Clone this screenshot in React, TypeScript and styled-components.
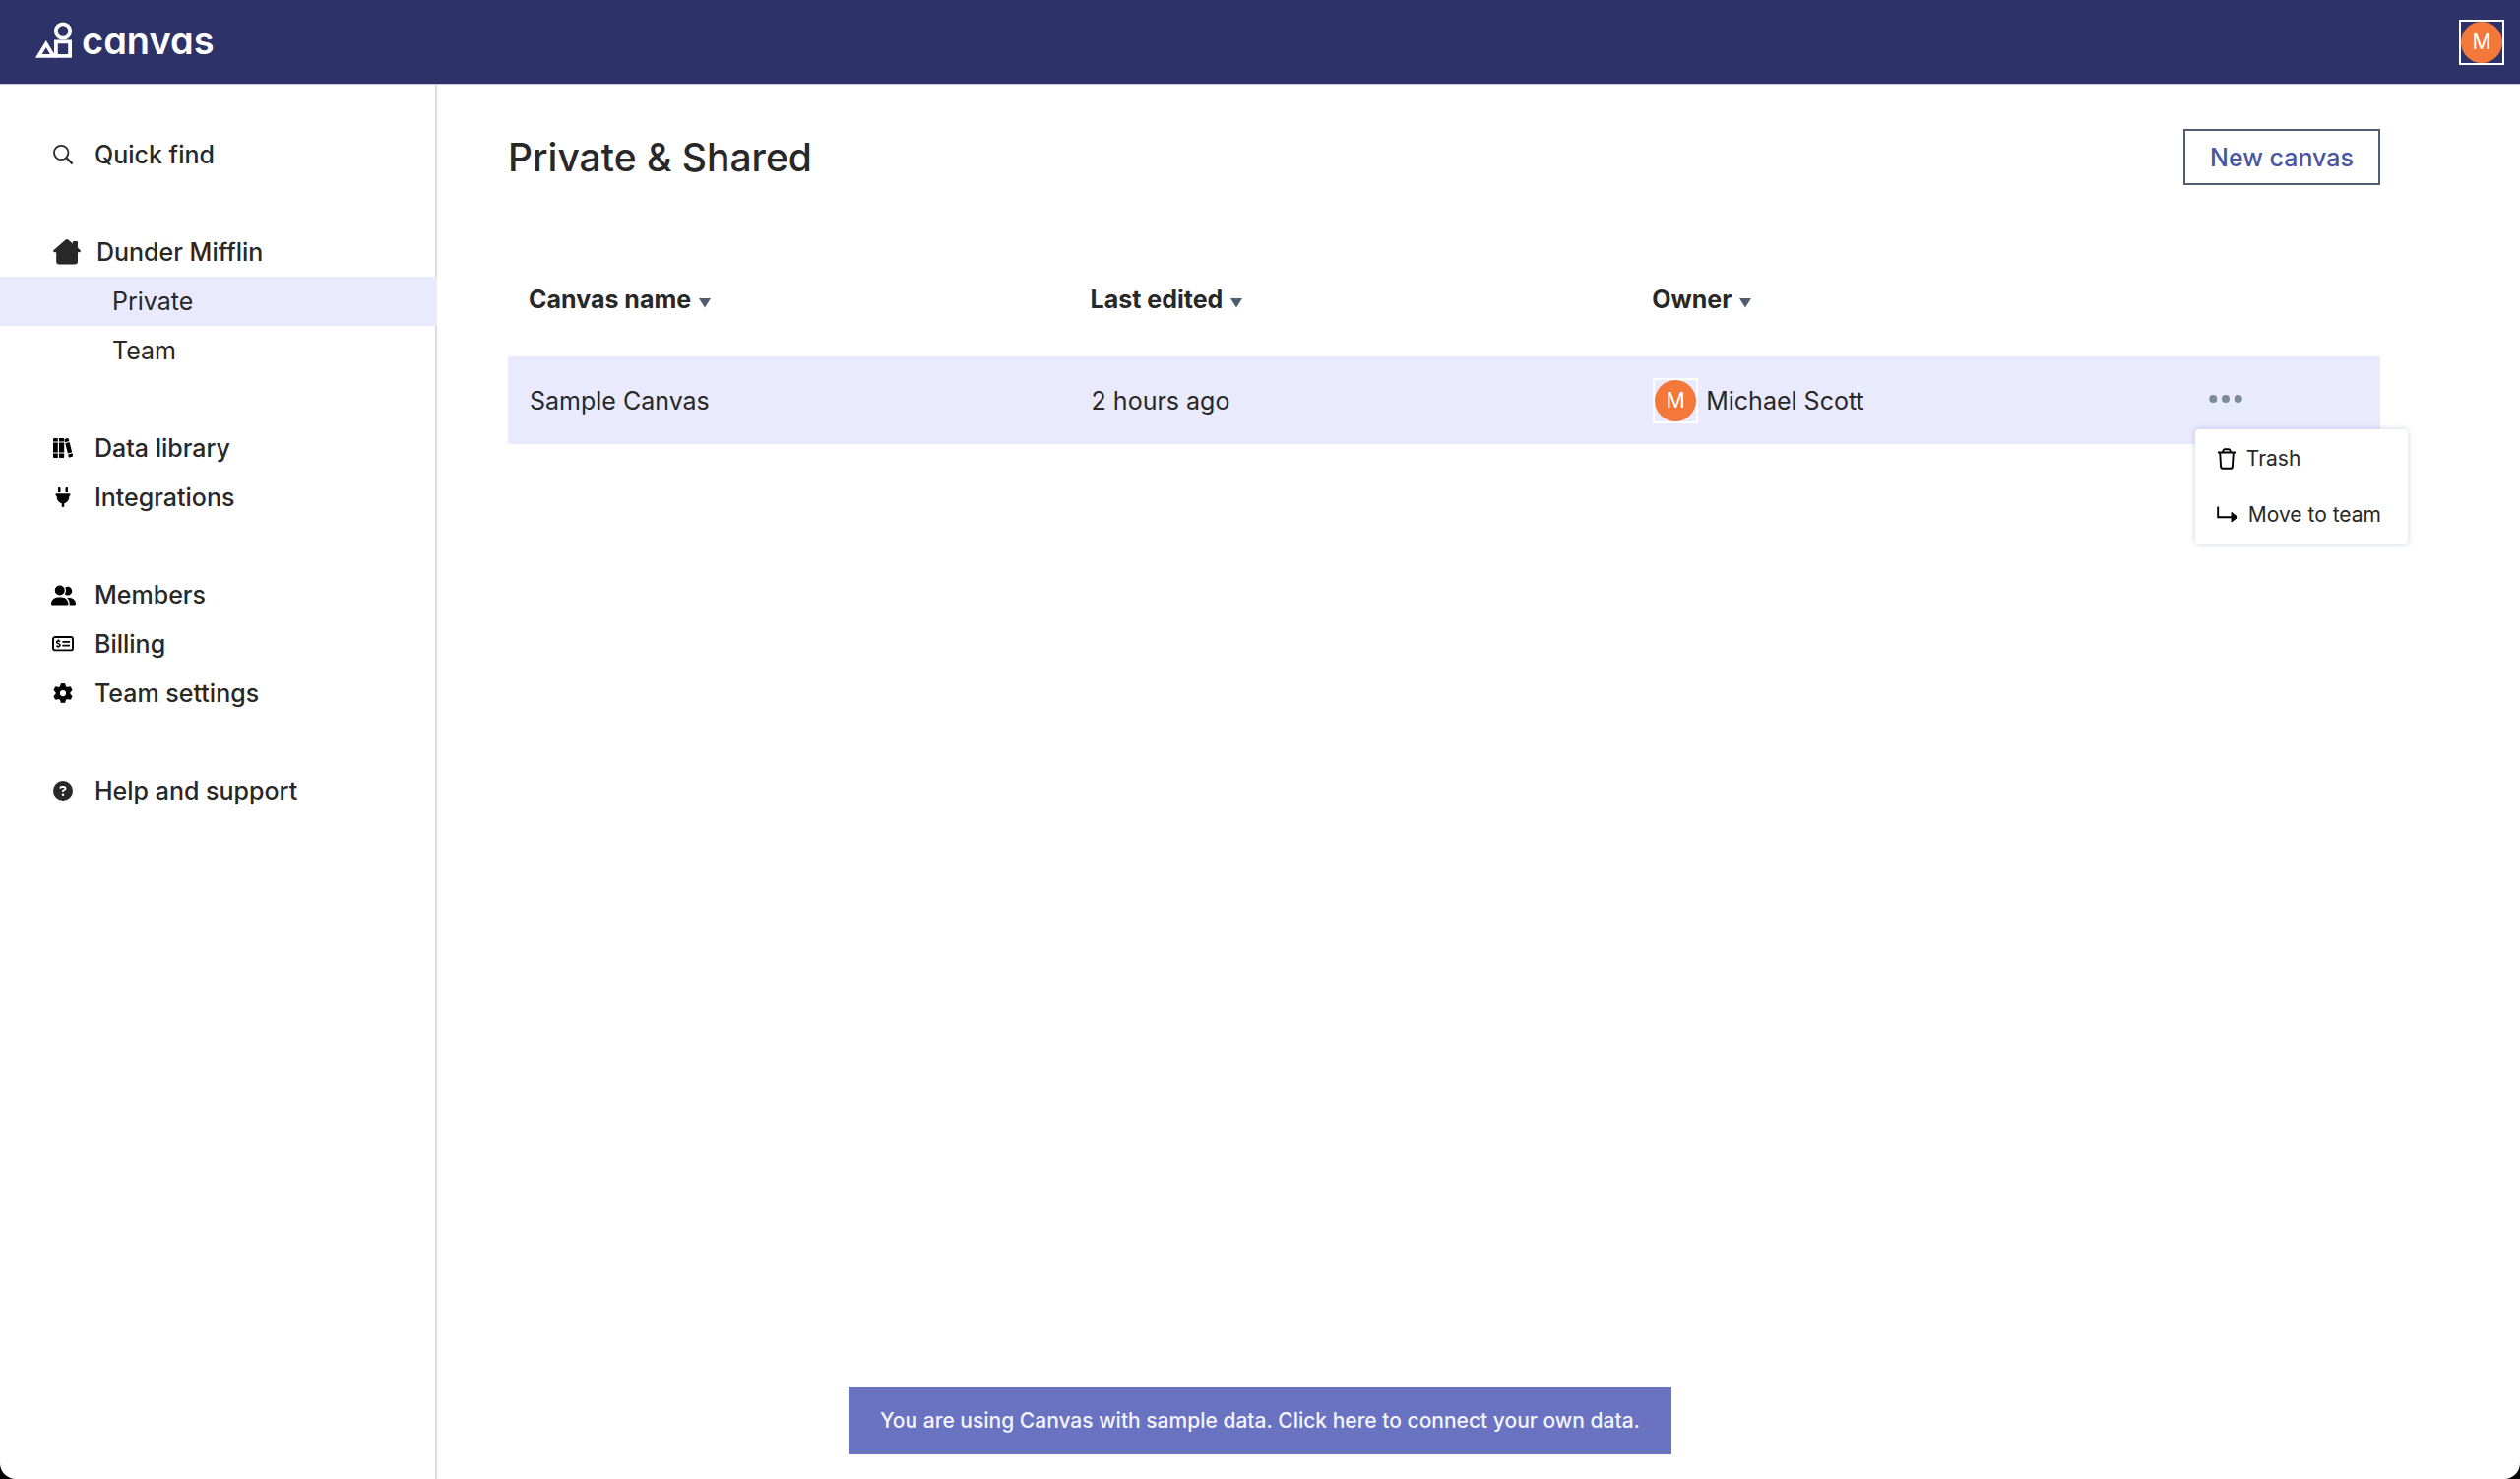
import React from "react";
import styled, { createGlobalStyle } from "styled-components";
import { FaCircleQuestion, FaGear, FaPlug, FaUserGroup } from "react-icons/fa6";

const color = {
  navy: "#2d3369",
  ink: "#282828",
  tint: "#eaeafe",
  line: "#d8dde9",
  slate: "#4f5d70",
  indigo: "#4a55a5",
  orange: "#f5783b",
};

const GlobalStyle = createGlobalStyle`
  *, *::before, *::after { box-sizing: border-box; }
  html { background: #000; }
  body {
    margin: 0;
    font-family: Inter, "Liberation Sans", sans-serif;
    font-size: 25px;
    line-height: 30px;
    color: ${color.ink};
  }
  button { font: inherit; color: inherit; background: none; border: 0; padding: 0; cursor: pointer; }
  a { color: inherit; text-decoration: none; }
  svg { display: block; flex: none; }
`;

const Page = styled.div`
  min-height: 100vh;
  display: flex;
  flex-direction: column;
  background: #fff;
  border-radius: 0 0 16px 16px;
  overflow: hidden;
`;

const Header = styled.header`
  height: 86px;
  padding: 0 16px 0 36px;
  display: flex;
  align-items: center;
  justify-content: space-between;
  background: ${color.navy};
  border-bottom: 1px solid #c9c8e0;
`;

const Brand = styled.a`
  display: flex;
  align-items: center;
  gap: 9px;
  padding-bottom: 3px;
`;

const Wordmark = styled.span`
  color: #fff;
  font-size: 38px;
  line-height: 40px;
  font-weight: 600;
  font-feature-settings: "cv11";
`;

const Avatar = styled.span`
  width: 46px;
  height: 46px;
  display: flex;
  border: 2px solid #fff;
  flex: none;
`;

const Initial = styled.span`
  flex: 1;
  display: flex;
  align-items: center;
  justify-content: center;
  border-radius: 50%;
  background: ${color.orange};
  color: #fff;
  font-size: 21px;
  line-height: 28px;
`;

const Body = styled.div`
  flex: 1;
  display: flex;
`;

const Sidebar = styled.nav`
  width: 444px;
  flex: none;
  padding-top: 46px;
  display: flex;
  flex-direction: column;
  gap: 49px;
  box-shadow: inset -2px 0 ${color.line};
`;

const NavGroup = styled.ul`
  list-style: none;
  margin: 0;
  padding: 0;
`;

const NavLink = styled.a<{ $sub?: boolean; $active?: boolean }>`
  height: 50px;
  display: flex;
  align-items: center;
  gap: 16px;
  padding-left: ${(p) => (p.$sub ? 114 : 48)}px;
  font-weight: ${(p) => (p.$sub ? 400 : 500)};
  background: ${(p) => (p.$active ? color.tint : "transparent")};
`;

const IconSlot = styled.span<{ $wide?: boolean }>`
  width: ${(p) => (p.$wide ? 34 : 32)}px;
  display: flex;
  justify-content: ${(p) => (p.$wide ? "flex-end" : "center")};
  color: ${(p) => (p.$wide ? color.ink : "#000")};
`;

const Main = styled.main`
  flex: 1;
  padding: 45px 142px 0 72px;
`;

const TitleBar = styled.div`
  display: flex;
  align-items: center;
  justify-content: space-between;
`;

const Title = styled.h1`
  margin: 0;
  font-size: 39px;
  line-height: 50px;
  font-weight: 500;
`;

const NewButton = styled.button`
  height: 57px;
  padding: 0 25px;
  border: 2px solid ${color.slate};
  color: ${color.indigo};
  font-weight: 500;
`;

const Table = styled.table`
  width: 100%;
  margin-top: 58px;
  table-layout: fixed;
  border-collapse: collapse;
  text-align: left;
`;

const HeadCell = styled.th<{ $width: number }>`
  width: ${(p) => p.$width}%;
  height: 116px;
  padding: 0 21px;
  font-weight: 700;
`;

const SortButton = styled.button`
  display: flex;
  align-items: baseline;
  gap: 8px;
`;

const Row = styled.tr`
  background: ${color.tint};
`;

const Cell = styled.td`
  height: 89px;
  padding: 0 22px;
`;

const ActionCell = styled(Cell)`
  position: relative;
  padding: 0 16px;
`;

const Owner = styled.div`
  display: flex;
  align-items: center;
  gap: 8px;
`;

const DotsButton = styled.button`
  display: flex;
  height: 30px;
  padding-bottom: 3px;
  align-items: center;
  color: #7d8b99;
`;

const Menu = styled.div`
  position: absolute;
  top: 74px;
  left: 2px;
  width: 216px;
  padding: 1px 0;
  background: #fff;
  border-radius: 4px;
  box-shadow: 0 0 6px rgba(70, 90, 130, 0.28);
`;

const MenuItem = styled.button`
  width: 100%;
  height: 57px;
  padding-left: 22px;
  display: flex;
  align-items: center;
  gap: 10px;
  font-size: 21px;
  line-height: 28px;
  white-space: nowrap;
`;

const Banner = styled.a`
  position: fixed;
  left: 50%;
  bottom: 25px;
  transform: translateX(-50%);
  padding: 20px 32px;
  background: #6973c1;
  color: #f3f4ff;
  font-size: 21px;
  line-height: 28px;
  font-weight: 500;
  white-space: nowrap;
`;

const LogoMark = () => (
  <svg width="38" height="38" viewBox="0 0 38 38" fill="none" stroke="#fff" strokeWidth="3.8" aria-hidden="true">
    <circle cx="28" cy="9.5" r="7.2" />
    <path d="M20.9 20.4h14.2v14.4H20.9z" />
    <path d="M3.4 34.8 10.8 22.6 18.2 34.8z" />
  </svg>
);

const SearchIcon = () => (
  <svg width="22" height="22" viewBox="0 0 22 22" fill="none" stroke={color.ink} strokeWidth="1.8" aria-hidden="true">
    <circle cx="9.2" cy="9" r="7.2" />
    <path d="m14.4 14.2 6.2 6.2" strokeWidth="2.2" />
  </svg>
);

const HouseIcon = () => (
  <svg width="28" height="26" viewBox="0 0 28 26" fill="currentColor" aria-hidden="true">
    <path d="M12.7.6a2 2 0 0 1 2.6 0l4.7 4V3a1 1 0 0 1 1-1h3a1 1 0 0 1 1 1v5.800l2.400 2.300c1 .9.5 2-.7 2.100H25v9.200a3 3 0 0 1-3 3H6.200a3 3 0 0 1-3-3v-9.200H1.400C.2 13.100-.3 12 .6 11.100z" />
  </svg>
);

const BooksIcon = () => (
  <svg width="20" height="20" viewBox="0 0 20 20" fill="currentColor" aria-hidden="true">
    <path d="M1 0h3.800v3.400H0V1a1 1 0 0 1 1-1zM0 4.400h4.800v10.200H0zM0 15.600h4.800V20H1a1 1 0 0 1-1-1z" />
    <path d="M6 0h4.200a1 1 0 0 1 1 1v2.400H6zM6 4.400h5.200v10.200H6zM6 15.600h5.200V19a1 1 0 0 1-1 1H7a1 1 0 0 1-1-1z" />
    <path d="m11.600.9 2.900-.8a1 1 0 0 1 1.200.7l.6 2.300-4.300 1.200zM12.300 5.300l4.300-1.200 2.600 10.200-4.300 1.200zM15.200 16.500l4.300-1.200.5 2.200a1 1 0 0 1-.7 1.200l-2.500.7a1 1 0 0 1-1.200-.7z" />
  </svg>
);

const BillingIcon = () => (
  <svg width="22" height="16" viewBox="0 0 22 16" fill="none" stroke="currentColor" aria-hidden="true">
    <rect x="1" y="1" width="20" height="13.4" rx="2" strokeWidth="1.9" />
    <path d="M10.4 5.800h7.600M10.400 9.700h7.600" strokeWidth="1.7" />
    <path d="M8.200 5.500C6.800 4.600 4.600 4.700 4.600 6.200c0 1.700 3.500 1.200 3.500 2.900 0 1.600-2.400 1.600-3.800.7M6.300 3.600v1.200M6.300 10.500v1.300" strokeWidth="1.5" />
  </svg>
);

const SortArrow = () => (
  <svg width="12" height="10" viewBox="0 0 12 10" fill={color.slate} aria-hidden="true">
    <path d="M0 0h12L6 9.500z" />
  </svg>
);

const DotsIcon = () => (
  <svg width="34" height="10" viewBox="0 0 34 10" fill="currentColor" aria-hidden="true">
    <circle cx="4.3" cy="5" r="4" />
    <circle cx="17" cy="5" r="4" />
    <circle cx="29.7" cy="5" r="4" />
  </svg>
);

const TrashIcon = () => (
  <svg width="20" height="22" viewBox="0 0 20 22" fill="none" stroke="#000" strokeWidth="1.9" strokeLinejoin="round" aria-hidden="true">
    <path d="M1 4.500h18M6 4.300 6.600 2.200A1.500 1.500 0 0 1 8 1.200h4a1.500 1.500 0 0 1 1.400 1L14 4.300M3.200 4.500l.9 14.400a2 2 0 0 0 2 1.900h7.800a2 2 0 0 0 2-1.900l.9-14.400" />
  </svg>
);

const MoveIcon = () => (
  <svg width="22" height="18" viewBox="0 0 22 18" fill="none" stroke="#000" strokeWidth="1.9" aria-hidden="true">
    <path d="M1.200.5v10.700H15" />
    <path d="M15 6.400v9.600l6-4.800z" fill="#000" strokeWidth="1" strokeLinejoin="round" />
  </svg>
);

type NavEntry = { label: string; icon?: React.ReactNode; wide?: boolean; active?: boolean };

const groups: NavEntry[][] = [
  [{ label: "Quick find", icon: <SearchIcon /> }],
  [
    { label: "Dunder Mifflin", icon: <HouseIcon />, wide: true },
    { label: "Private", active: true },
    { label: "Team" },
  ],
  [
    { label: "Data library", icon: <BooksIcon /> },
    { label: "Integrations", icon: <FaPlug size={20} /> },
  ],
  [
    { label: "Members", icon: <FaUserGroup size={25} /> },
    { label: "Billing", icon: <BillingIcon /> },
    { label: "Team settings", icon: <FaGear size={20} /> },
  ],
  [{ label: "Help and support", icon: <FaCircleQuestion size={20} color={color.ink} /> }],
];

const columns = ["Canvas name", "Last edited", "Owner"];

const UserAvatar = () => (
  <Avatar>
    <Initial>M</Initial>
  </Avatar>
);

export default function App() {
  return (
    <>
      <GlobalStyle />
      <Page>
        <Header>
          <Brand href="#">
            <LogoMark />
            <Wordmark>canvas</Wordmark>
          </Brand>
          <button type="button" aria-label="Account">
            <UserAvatar />
          </button>
        </Header>
        <Body>
          <Sidebar>
            {groups.map((group) => (
              <NavGroup key={group[0].label}>
                {group.map((item) => (
                  <li key={item.label}>
                    <NavLink href="#" $sub={!item.icon} $active={item.active}>
                      {item.icon && <IconSlot $wide={item.wide}>{item.icon}</IconSlot>}
                      {item.label}
                    </NavLink>
                  </li>
                ))}
              </NavGroup>
            ))}
          </Sidebar>
          <Main>
            <TitleBar>
              <Title>Private &amp; Shared</Title>
              <NewButton type="button">New canvas</NewButton>
            </TitleBar>
            <Table>
              <thead>
                <tr>
                  {columns.map((name) => (
                    <HeadCell key={name} $width={30} scope="col">
                      <SortButton type="button">
                        {name}
                        <SortArrow />
                      </SortButton>
                    </HeadCell>
                  ))}
                  <HeadCell $width={10} scope="col" aria-label="Actions" />
                </tr>
              </thead>
              <tbody>
                <Row>
                  <Cell>Sample Canvas</Cell>
                  <Cell>2 hours ago</Cell>
                  <Cell>
                    <Owner>
                      <UserAvatar />
                      Michael Scott
                    </Owner>
                  </Cell>
                  <ActionCell>
                    <DotsButton type="button" aria-label="More actions">
                      <DotsIcon />
                    </DotsButton>
                    <Menu>
                      <MenuItem type="button">
                        <TrashIcon />
                        Trash
                      </MenuItem>
                      <MenuItem type="button">
                        <MoveIcon />
                        Move to team
                      </MenuItem>
                    </Menu>
                  </ActionCell>
                </Row>
              </tbody>
            </Table>
          </Main>
        </Body>
        <Banner href="#">
          You are using Canvas with sample data. Click here to connect your own data.
        </Banner>
      </Page>
    </>
  );
}
